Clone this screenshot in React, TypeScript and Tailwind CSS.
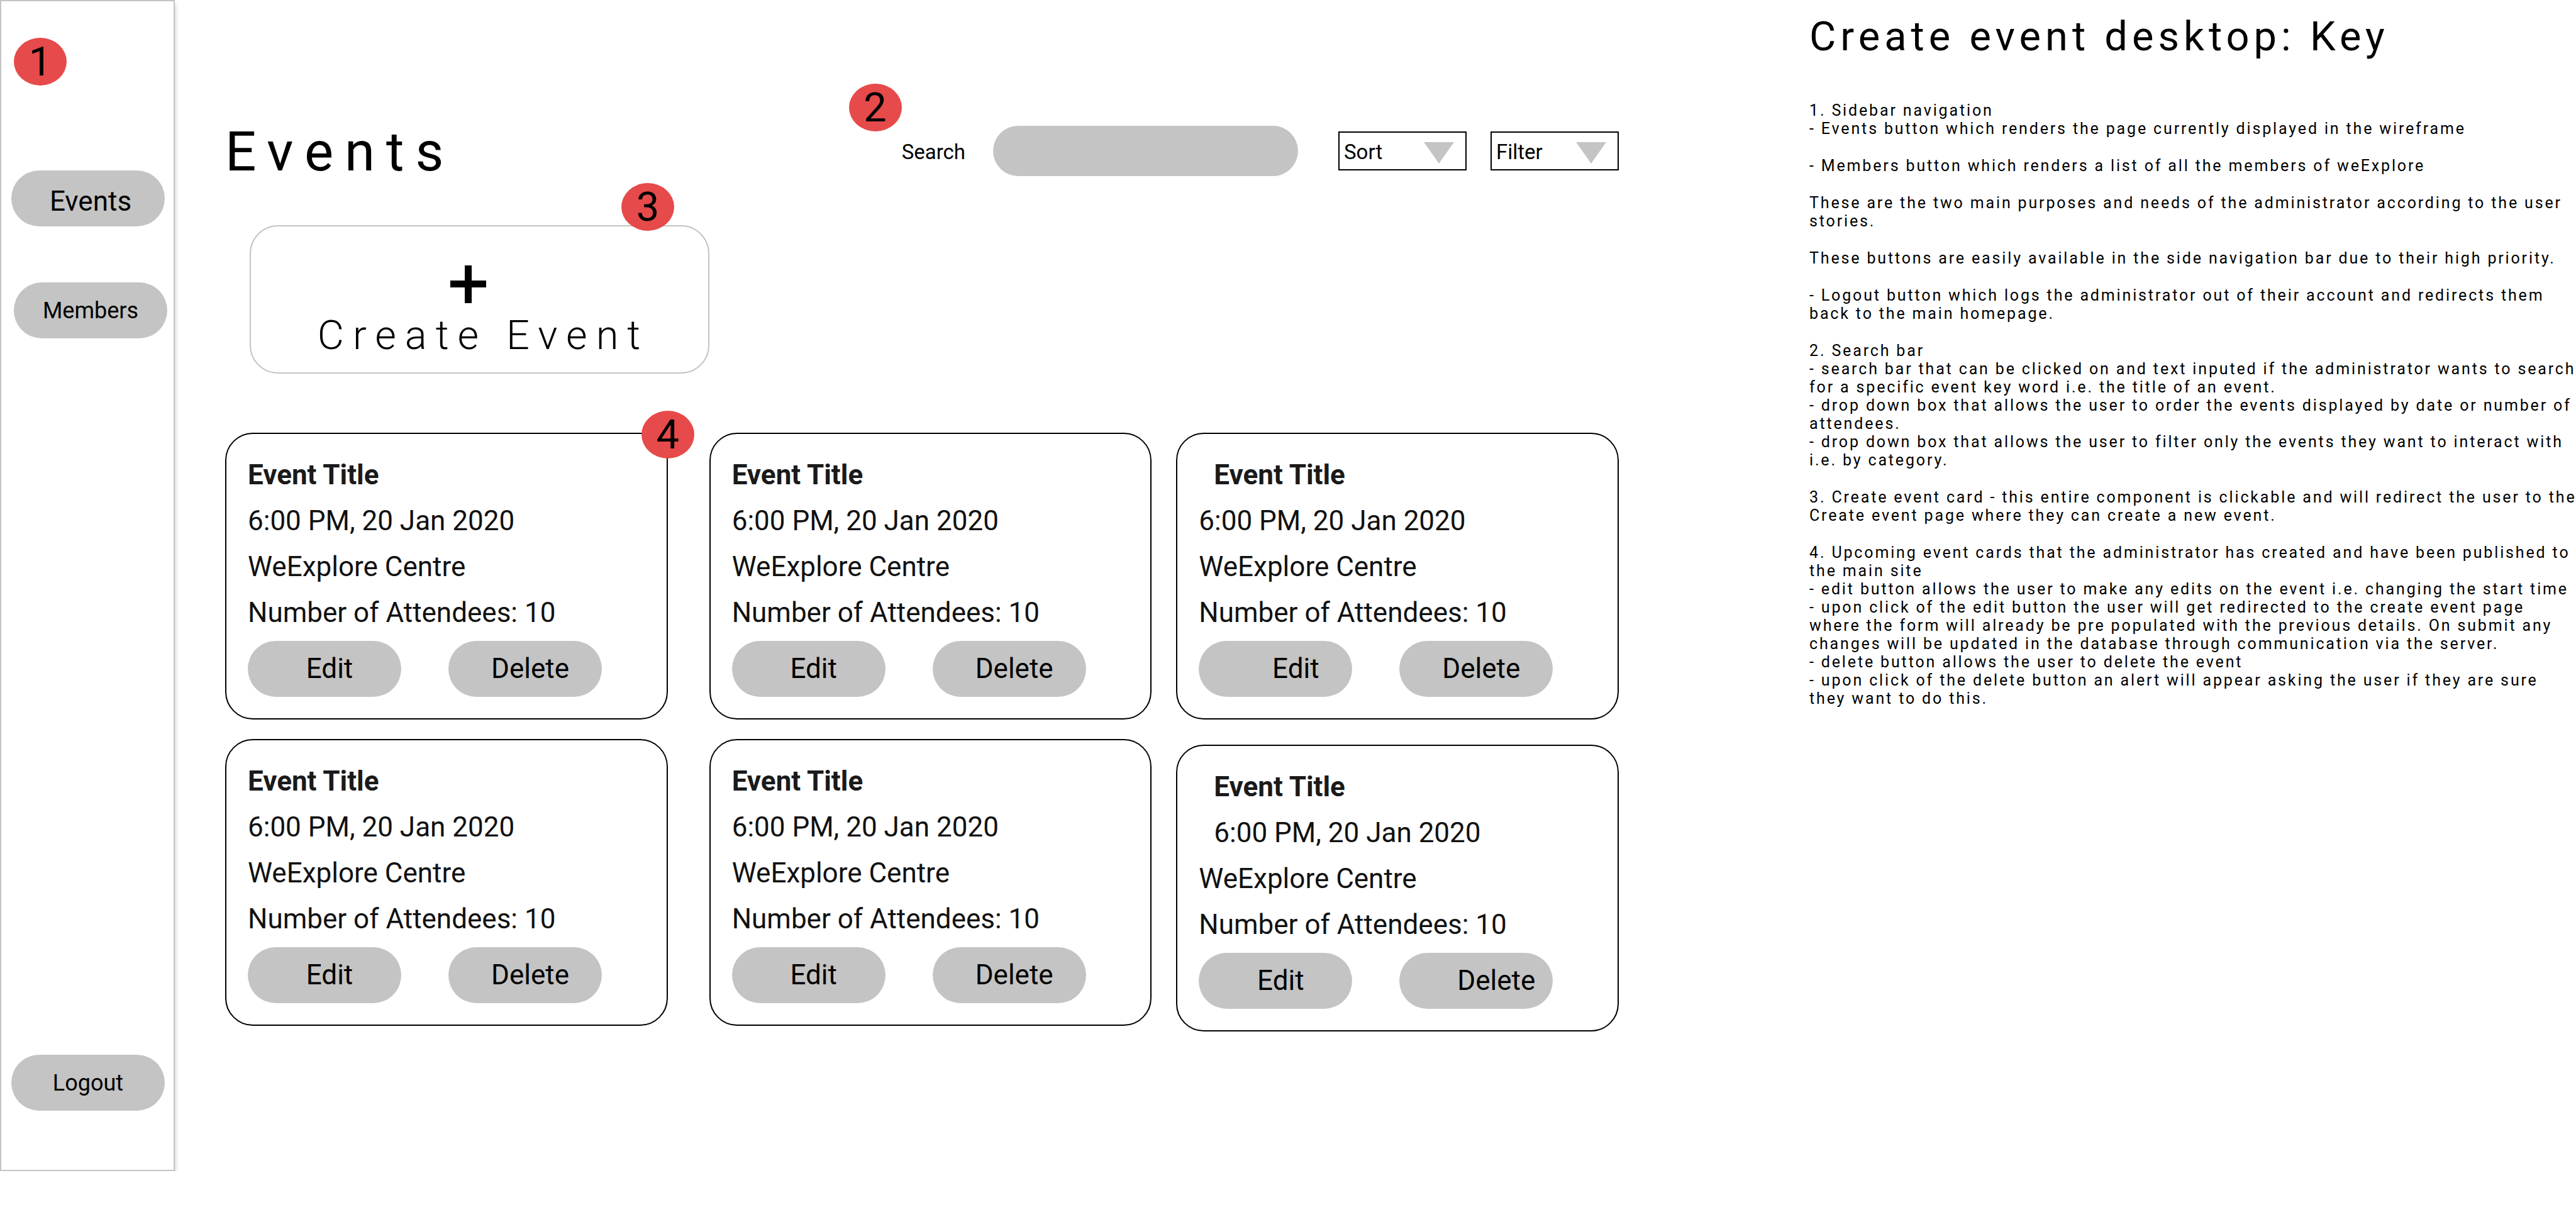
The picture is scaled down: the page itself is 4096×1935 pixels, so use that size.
import type { ReactNode } from "react";

type CardOptions = {
  indentTitle?: boolean;
  indentTime?: boolean;
  shiftEdit?: boolean;
  shiftDelete?: boolean;
};

const columns: { className: string; cards: CardOptions[] }[] = [
  { className: "gap-[31px]", cards: [{}, {}] },
  { className: "ml-[66px] gap-[31px]", cards: [{}, {}] },
  {
    className: "ml-[39px] gap-10",
    cards: [
      { indentTitle: true, shiftEdit: true },
      { indentTitle: true, indentTime: true, shiftDelete: true },
    ],
  },
];

const notes: string[][] = [
  [
    "1. Sidebar navigation",
    "- Events button which renders the page currently displayed in the wireframe",
  ],
  ["- Members button which renders a list of all the members of weExplore"],
  [
    "These are the two main purposes and needs of the administrator according to the user stories.",
  ],
  [
    "These buttons are easily available in the side navigation bar due to their high priority.",
  ],
  [
    "- Logout button which logs the administrator out of their account and redirects them back to the main homepage.",
  ],
  [
    "2. Search bar",
    "- search bar that can be clicked on and text inputed if the administrator wants to search for a specific event key word i.e. the title of an event.",
    "- drop down box that allows the user to order the events displayed by date or number of attendees.",
    "- drop down box that allows the user to filter only the events they want to interact with i.e. by category.",
  ],
  [
    "3. Create event card - this entire component is clickable and will redirect the user to the Create event page where they can create a new event.",
  ],
  [
    "4. Upcoming event cards that the administrator has created and have been published to the main site",
    "- edit button allows the user to make any edits on the event i.e. changing the start time",
    "- upon click of the edit button the user will get redirected to the create event page\nwhere the form will already be pre populated with the previous details. On submit any\nchanges will be updated in the database through communication via the server.",
    "- delete button allows the user to delete the event",
    "- upon click of the delete button an alert will appear asking the user if they are sure\nthey want to do this.",
  ],
];

function Badge({ className, children }: { className: string; children: ReactNode }) {
  return (
    <span
      className={`z-10 flex h-[76px] w-[84px] items-center justify-center rounded-[50%] bg-[#e64a4a] text-[65px] leading-none text-black ${className}`}
    >
      {children}
    </span>
  );
}

function Pill({ className, children }: { className: string; children: ReactNode }) {
  return (
    <button
      type="button"
      className={`flex h-[89px] w-[244px] items-center justify-center rounded-full bg-[#c4c4c4] ${className}`}
    >
      {children}
    </button>
  );
}

function Dropdown({ label }: { label: string }) {
  return (
    <div className="relative h-[62px] w-[204px]">
      <select
        aria-label={label}
        className="h-full w-full appearance-none border-2 border-black bg-white pt-1 pl-[7px] text-[33px] text-black"
      >
        <option>{label}</option>
      </select>
      <svg
        viewBox="0 0 48 34"
        className="pointer-events-none absolute top-[17px] right-5 h-[34px] w-12"
        aria-hidden="true"
      >
        <path d="M0 0H48L24 34Z" fill="#c4c4c4" />
      </svg>
    </div>
  );
}

function EventCard({ indentTitle, indentTime, shiftEdit, shiftDelete }: CardOptions) {
  return (
    <article className="rounded-[44px] border-2 border-black px-[34px] pt-[29px] pb-[34px] text-[44px] leading-[73px] text-[#111]">
      <h2 className={`font-bold text-[#1a1a1a] ${indentTitle ? "pl-6" : ""}`}>Event Title</h2>
      <p className={indentTime ? "pl-6" : ""}>6:00 PM, 20 Jan 2020</p>
      <p>WeExplore Centre</p>
      <p>Number of Attendees: 10</p>
      <div className="flex gap-[75px] pt-2 text-black">
        <Pill className={shiftEdit ? "pl-16" : "pl-4"}>Edit</Pill>
        <Pill className={shiftDelete ? "pl-16" : "pl-4"}>Delete</Pill>
      </div>
    </article>
  );
}

export default function App() {
  return (
    <div className="flex items-start overflow-x-clip bg-white font-['Roboto',sans-serif] text-black">
      <nav className="flex h-[1862px] w-[278px] shrink-0 flex-col items-start border-2 border-[#c4c4c4] bg-white pt-[58px] pb-[94px] pl-4 shadow-[0_7px_7px_rgba(0,0,0,0.25)] [clip-path:inset(0_-8px_0_0)]">
        <Badge className="ml-1">1</Badge>
        <Pill className="mt-[135px] pt-2 pl-2 text-[44px]">Events</Pill>
        <Pill className="mt-[89px] ml-1 text-[36px]">Members</Pill>
        <Pill className="mt-auto text-[36px]">Logout</Pill>
      </nav>

      <main className="mr-[303px] ml-20 min-w-0 flex-1 pt-[190px]">
        <header className="flex items-center">
          <h1 className="mr-auto pt-0.5 text-[87px] leading-[98px] tracking-[18px]">Events</h1>
          <div className="relative flex items-center">
            <Badge className="absolute right-full bottom-[71px]">2</Badge>
            <label htmlFor="search" className="pt-1 text-[33px]">
              Search
            </label>
            <input
              id="search"
              type="search"
              className="ml-11 h-20 w-[485px] rounded-full bg-[#c4c4c4] px-10 text-[33px]"
            />
          </div>
          <div className="ml-16 flex gap-[38px]">
            <Dropdown label="Sort" />
            <Dropdown label="Filter" />
          </div>
        </header>

        <div className="relative mt-[68px] ml-[39px] w-[731px]">
          <button
            type="button"
            className="flex h-[236px] w-full flex-col items-center justify-start rounded-[45px] border-2 border-[#c4c4c4] pt-[62px]"
          >
            <svg viewBox="0 0 57 60" className="mr-9 h-[60px] w-[57px]" aria-hidden="true">
              <path d="M23 0h11v24h23v11H34v25H23V35H0V24h23z" />
            </svg>
            <span className="mt-[10px] pl-3 text-[65px] leading-[82px] font-light tracking-[14px]">
              Create Event
            </span>
          </button>
          <Badge className="absolute -top-[67px] right-14">3</Badge>
        </div>

        <section className="relative mt-[94px] flex items-start">
          {columns.map((column, i) => (
            <div key={i} className={`relative flex flex-1 flex-col ${column.className}`}>
              {column.cards.map((card, j) => (
                <EventCard key={j} {...card} />
              ))}
              {i === 0 && <Badge className="absolute -top-[35px] -right-[42px]">4</Badge>}
            </div>
          ))}
        </section>
      </main>

      <aside className="w-[1219px] shrink-0 pt-[19px]">
        <h2 className="text-[65px] leading-[78px] tracking-[7px]">Create event desktop: Key</h2>
        <div className="mt-16 -mr-2 flex flex-col gap-[30px] text-[25px] leading-[29px] tracking-[0.114em] whitespace-pre-line">
          {notes.map((group, i) => (
            <div key={i}>
              {group.map((line) => (
                <p key={line}>{line}</p>
              ))}
            </div>
          ))}
        </div>
      </aside>
    </div>
  );
}
